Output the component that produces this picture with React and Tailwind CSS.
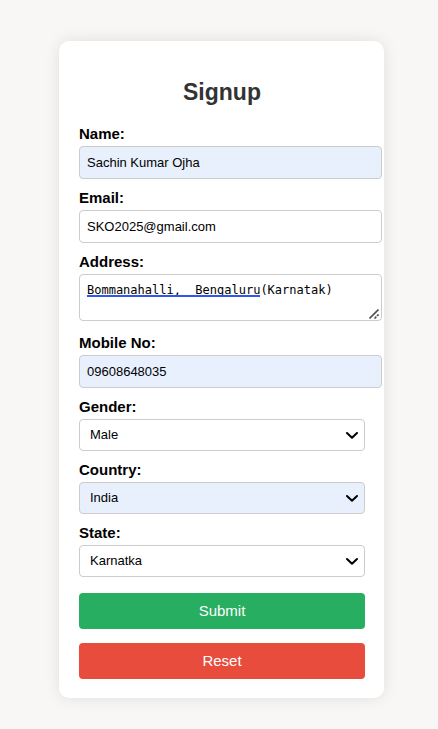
const CONTROL =
  'block rounded border border-[#cccccc] text-[13px] leading-[18px] text-black outline-none';

function Field({ id, label, wide, children }) {
  return (
    <div className={wide ? '-mr-[17px]' : ''}>
      <label
        htmlFor={id}
        className="mt-[10px] mb-[3px] block text-[15px] leading-[18px] font-bold text-black"
      >
        {label}
      </label>
      {children}
    </div>
  );
}

function TextField({ id, label, value, type = 'text', filled }) {
  return (
    <Field id={id} label={label} wide>
      <input
        id={id}
        type={type}
        defaultValue={value}
        className={`${CONTROL} h-[33px] w-full px-[7px] ${filled ? 'bg-[#e8f0fe]' : 'bg-white'}`}
      />
    </Field>
  );
}

function SelectField({ id, label, options, filled }) {
  return (
    <Field id={id} label={label}>
      <div className="relative">
        <select
          id={id}
          defaultValue={options[0]}
          className={`${CONTROL} h-8 w-full appearance-none pr-8 pl-[10px] ${filled ? 'bg-[#e8f0fe]' : 'bg-white'}`}
        >
          {options.map((option) => (
            <option key={option}>{option}</option>
          ))}
        </select>
        <svg
          aria-hidden="true"
          viewBox="0 0 14 8"
          className="pointer-events-none absolute top-3 right-[6px] h-2 w-[14px]"
          fill="none"
          stroke="#000"
          strokeWidth="2"
          strokeLinecap="round"
          strokeLinejoin="round"
        >
          <path d="M2 2 7 6.8 12 2" />
        </svg>
      </div>
    </Field>
  );
}

function AddressField() {
  return (
    <Field id="address" label="Address:" wide>
      <div className="relative mb-[13px]">
        <textarea
          id="address"
          spellCheck="false"
          defaultValue="Bommanahalli,  Bengaluru(Karnatak)"
          className="block h-[47px] w-full resize-none overflow-hidden rounded border border-[#cccccc] bg-white px-[7px] py-[7px] font-['DejaVu_Sans_Mono',monospace] text-[12px] leading-4 text-black outline-none"
        />
        <span
          aria-hidden="true"
          className="pointer-events-none absolute top-[21px] left-2 h-[2px] w-[173px] bg-[#2f55f5]"
        />
        <svg
          aria-hidden="true"
          viewBox="0 0 10 10"
          className="pointer-events-none absolute right-[3px] bottom-[2px] size-[10px]"
          stroke="#555"
          strokeWidth="1.7"
        >
          <path d="M.5 9.5 9.5.5M5.5 9.5l1.8-1.8M8 7l1.6-1.6" />
        </svg>
      </div>
    </Field>
  );
}

export default function App() {
  return (
    <main className="min-h-screen bg-[#f8f7f5] pt-[41px] pr-[54px] pb-[31px] pl-[59px] font-['Liberation_Sans',Arial,sans-serif]">
      <form
        className="rounded-[10px] bg-white pt-5 pr-[19px] pb-[19px] pl-5 shadow-[0_0_15px_rgba(0,0,0,0.1)]"
        onSubmit={(event) => event.preventDefault()}
      >
        <h2 className="mt-[17px] mb-[19px] text-center text-[23px] leading-7 font-bold text-[#333333]">
          Signup
        </h2>
        <TextField id="name" label="Name:" value="Sachin Kumar Ojha" filled />
        <TextField id="email" label="Email:" type="email" value="SKO2025@gmail.com" />
        <AddressField />
        <TextField id="mobile" label="Mobile No:" type="tel" value="09608648035" filled />
        <SelectField id="gender" label="Gender:" options={['Male', 'Female', 'Other']} />
        <SelectField id="country" label="Country:" options={['India']} filled />
        <SelectField id="state" label="State:" options={['Karnatka']} />
        <button
          type="submit"
          className="mt-4 block h-9 w-full rounded bg-[#27ae60] text-[15px] text-white"
        >
          Submit
        </button>
        <button
          type="reset"
          className="mt-[14px] block h-9 w-full rounded bg-[#e74c3c] text-[15px] text-white"
        >
          Reset
        </button>
      </form>
    </main>
  );
}
